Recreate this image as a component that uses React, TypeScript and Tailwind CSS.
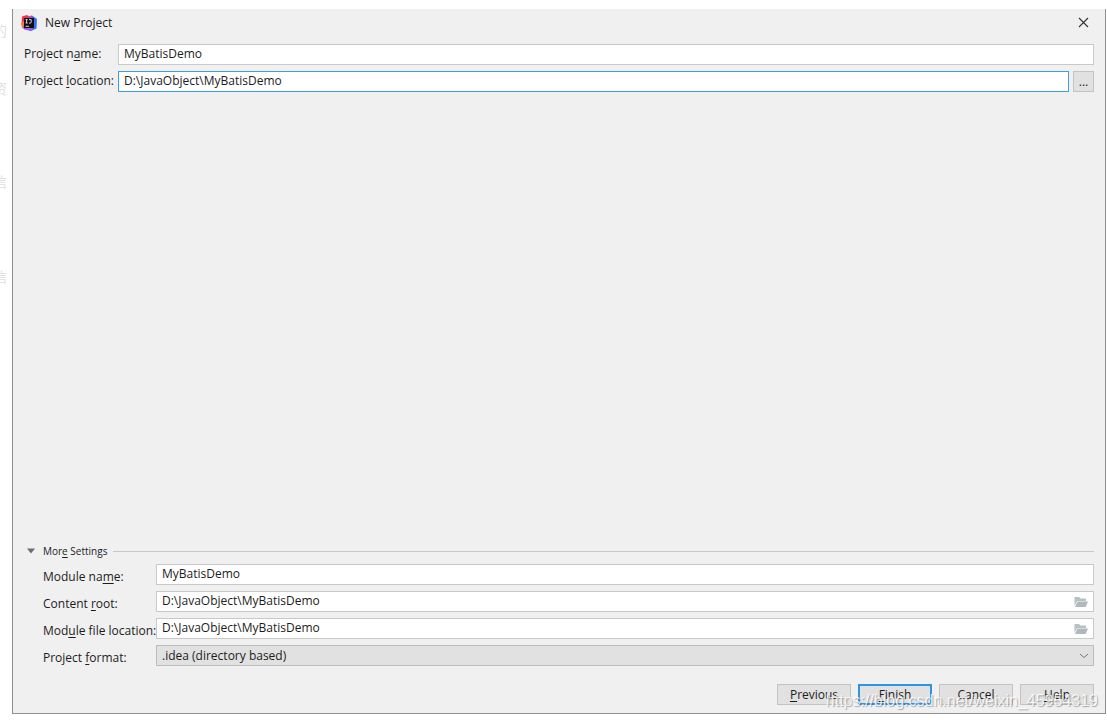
import { ReactNode } from "react";

const inputClass =
  "h-[21px] min-w-0 flex-1 border border-[#c9c9c9] bg-white px-[5px] pb-[2px] text-[12px] text-[#1c1c1c] outline-none";

const buttonClass =
  "h-[21px] w-[74px] border border-[#c3c3c3] bg-[#e1e1e1] text-[12px] leading-[18px]";

function U({ children }: { children: ReactNode }) {
  return <span className="underline underline-offset-2">{children}</span>;
}

function IdeaLogo() {
  return (
    <svg viewBox="0 0 16 16" className="h-4 w-4" aria-hidden="true">
      <path d="M1 1.5 L6 0 L9 2 L8 9 L0.5 10 Z" fill="#f0304f" />
      <path d="M0 8 L3 6 L5 14.5 L1 13 Z" fill="#f57a45" />
      <path d="M8 1.5 L11 0.5 L16 4 L15.5 13.5 L10 16 L5 14 L7 4 Z" fill="#3f6fe8" />
      <path d="M8 1.5 L10 0.5 L12 3.5 L8 4 Z" fill="#b44bd0" />
      <path d="M2 11 L12 12 L10 16 L3 14.5 Z" fill="#9560e6" />
      <rect x="3" y="3" width="10" height="10" fill="#120d16" />
      <path d="M4.5 4.6h2.2M5.6 4.6v3.4M4.5 8h2.2M8 4.6h2.2v2.8q0 .7-.9.7H8M4.5 11.3h3.5" stroke="#fff" strokeWidth=".8" fill="none" />
    </svg>
  );
}

function FolderIcon() {
  return (
    <svg viewBox="0 0 14 12" className="h-3 w-[14px]" aria-hidden="true">
      <path d="M0.5 10V1h4.5l1.5 1.6H12V5H3.2z" fill="#b9c0c4" />
      <path d="M3.6 5.6H14L11.6 11H1z" fill="#b0b8bd" />
    </svg>
  );
}

function PathField({ id, value }: { id: string; value: string }) {
  return (
    <div className="flex h-[21px] items-center border border-[#c9c9c9] bg-white pr-[5px]">
      <input
        id={id}
        defaultValue={value}
        className="h-full min-w-0 flex-1 bg-transparent px-[5px] pb-[2px] text-[12px] text-[#1c1c1c] outline-none"
      />
      <button aria-label="Browse">
        <FolderIcon />
      </button>
    </div>
  );
}

// slice of the page behind the dialog
function Gutter() {
  return (
    <div className="mr-[5px] flex w-[7px] shrink-0 flex-col items-end overflow-hidden pt-[14px] text-[14px] leading-4 text-[#e0e0e0]">
      <span>的</span>
      <span className="mt-[42px]">资</span>
      <span className="mt-[77px]">信</span>
      <span className="mt-[79px]">信</span>
    </div>
  );
}

export default function App() {
  return (
    <div className="flex min-h-screen bg-white pt-[9px] pr-px pb-[6px] font-['Open_Sans','Noto_Sans_CJK_SC',sans-serif] text-[12px] leading-4 text-[#1c1c1c]">
      <Gutter />
      <main className="relative flex min-w-0 flex-1 flex-col border-r border-b border-l border-[#8f8f93] bg-[#f0f0f0] pr-[11px]">
        <header className="flex h-[27px] items-center pl-2">
          <IdeaLogo />
          <h1 className="ml-2 flex-1">New Project</h1>
          <button aria-label="Close" className="mr-[5px]">
            <svg viewBox="0 0 11 11" className="h-[11px] w-[11px]">
              <path d="M1 1l9 9M10 1l-9 9" stroke="#333" strokeWidth="1.1" />
            </svg>
          </button>
        </header>

        <section className="mt-2 grid grid-cols-[94px_1fr] items-center gap-y-[6px] pl-[11px]">
          <label htmlFor="name" className="pb-[2px]">
            Project n<U>a</U>me:
          </label>
          <input id="name" defaultValue="MyBatisDemo" className={inputClass} />
          <label htmlFor="location" className="pb-[2px] whitespace-nowrap">
            Project <U>l</U>ocation:
          </label>
          <div className="flex gap-1">
            <input
              id="location"
              defaultValue="D:\JavaObject\MyBatisDemo"
              className="h-[21px] min-w-0 flex-1 border border-[#3c9fe6] bg-white px-[5px] pb-[2px] text-[12px] outline-none"
            />
            <button className="h-[21px] w-[21px] border border-[#c3c3c3] bg-[#e1e1e1] leading-4">...</button>
          </div>
        </section>

        <div className="flex-1" />

        <section>
          <button className="flex h-4 w-full items-center pl-[14px] text-[10px]">
            <svg viewBox="0 0 8 6" className="mr-2 h-[6px] w-2" aria-hidden="true">
              <path d="M0 0.5h8L4 5.5z" fill="#6e6e6e" />
            </svg>
            <span>
              Mor<U>e</U> Settings
            </span>
            <span className="ml-[6px] h-px flex-1 bg-[#c8c8c8]" />
          </button>
          <div className="mt-[5px] grid grid-cols-[113px_1fr] items-center gap-y-[6px] pl-[30px]">
            <label htmlFor="module" className="pt-1">
              Module na<U>m</U>e:
            </label>
            <input id="module" defaultValue="MyBatisDemo" className={inputClass} />
            <label htmlFor="root" className="pt-1">
              Content <U>r</U>oot:
            </label>
            <PathField id="root" value="D:\JavaObject\MyBatisDemo" />
            <label htmlFor="file" className="pt-1 whitespace-nowrap">
              Mod<U>u</U>le file location:
            </label>
            <PathField id="file" value="D:\JavaObject\MyBatisDemo" />
            <label htmlFor="format" className="pt-1">
              Project <U>f</U>ormat:
            </label>
            <div className="relative flex">
              <select
                id="format"
                className="h-[21px] w-full appearance-none border border-[#bdbdbd] bg-[#e1e1e1] px-[5px] text-[12px] outline-none"
              >
                <option>.idea (directory based)</option>
              </select>
              <svg viewBox="0 0 10 6" className="pointer-events-none absolute top-[8px] right-[5px] h-[6px] w-[10px]">
                <path d="M1 1l4 3.5L9 1" stroke="#777" fill="none" />
              </svg>
            </div>
          </div>
        </section>

        <footer className="mt-[18px] mb-2 flex justify-end gap-[7px]">
          <button className={buttonClass}>
            <U>P</U>revious
          </button>
          <button className="h-[21px] w-[74px] border-2 border-[#2c96e6] bg-[#e1e1e1] leading-4">
            <U>F</U>inish
          </button>
          <button className={buttonClass}>Cancel</button>
          <button className={buttonClass}>
            <U>H</U>elp
          </button>
        </footer>

        <span className="pointer-events-none absolute right-[7px] bottom-1 font-['Liberation_Sans',sans-serif] text-[16px] text-white/80 [text-shadow:1px_1px_1px_#0000004d]">
          https://blog.csdn.net/weixin_45954319
        </span>
      </main>
    </div>
  );
}
